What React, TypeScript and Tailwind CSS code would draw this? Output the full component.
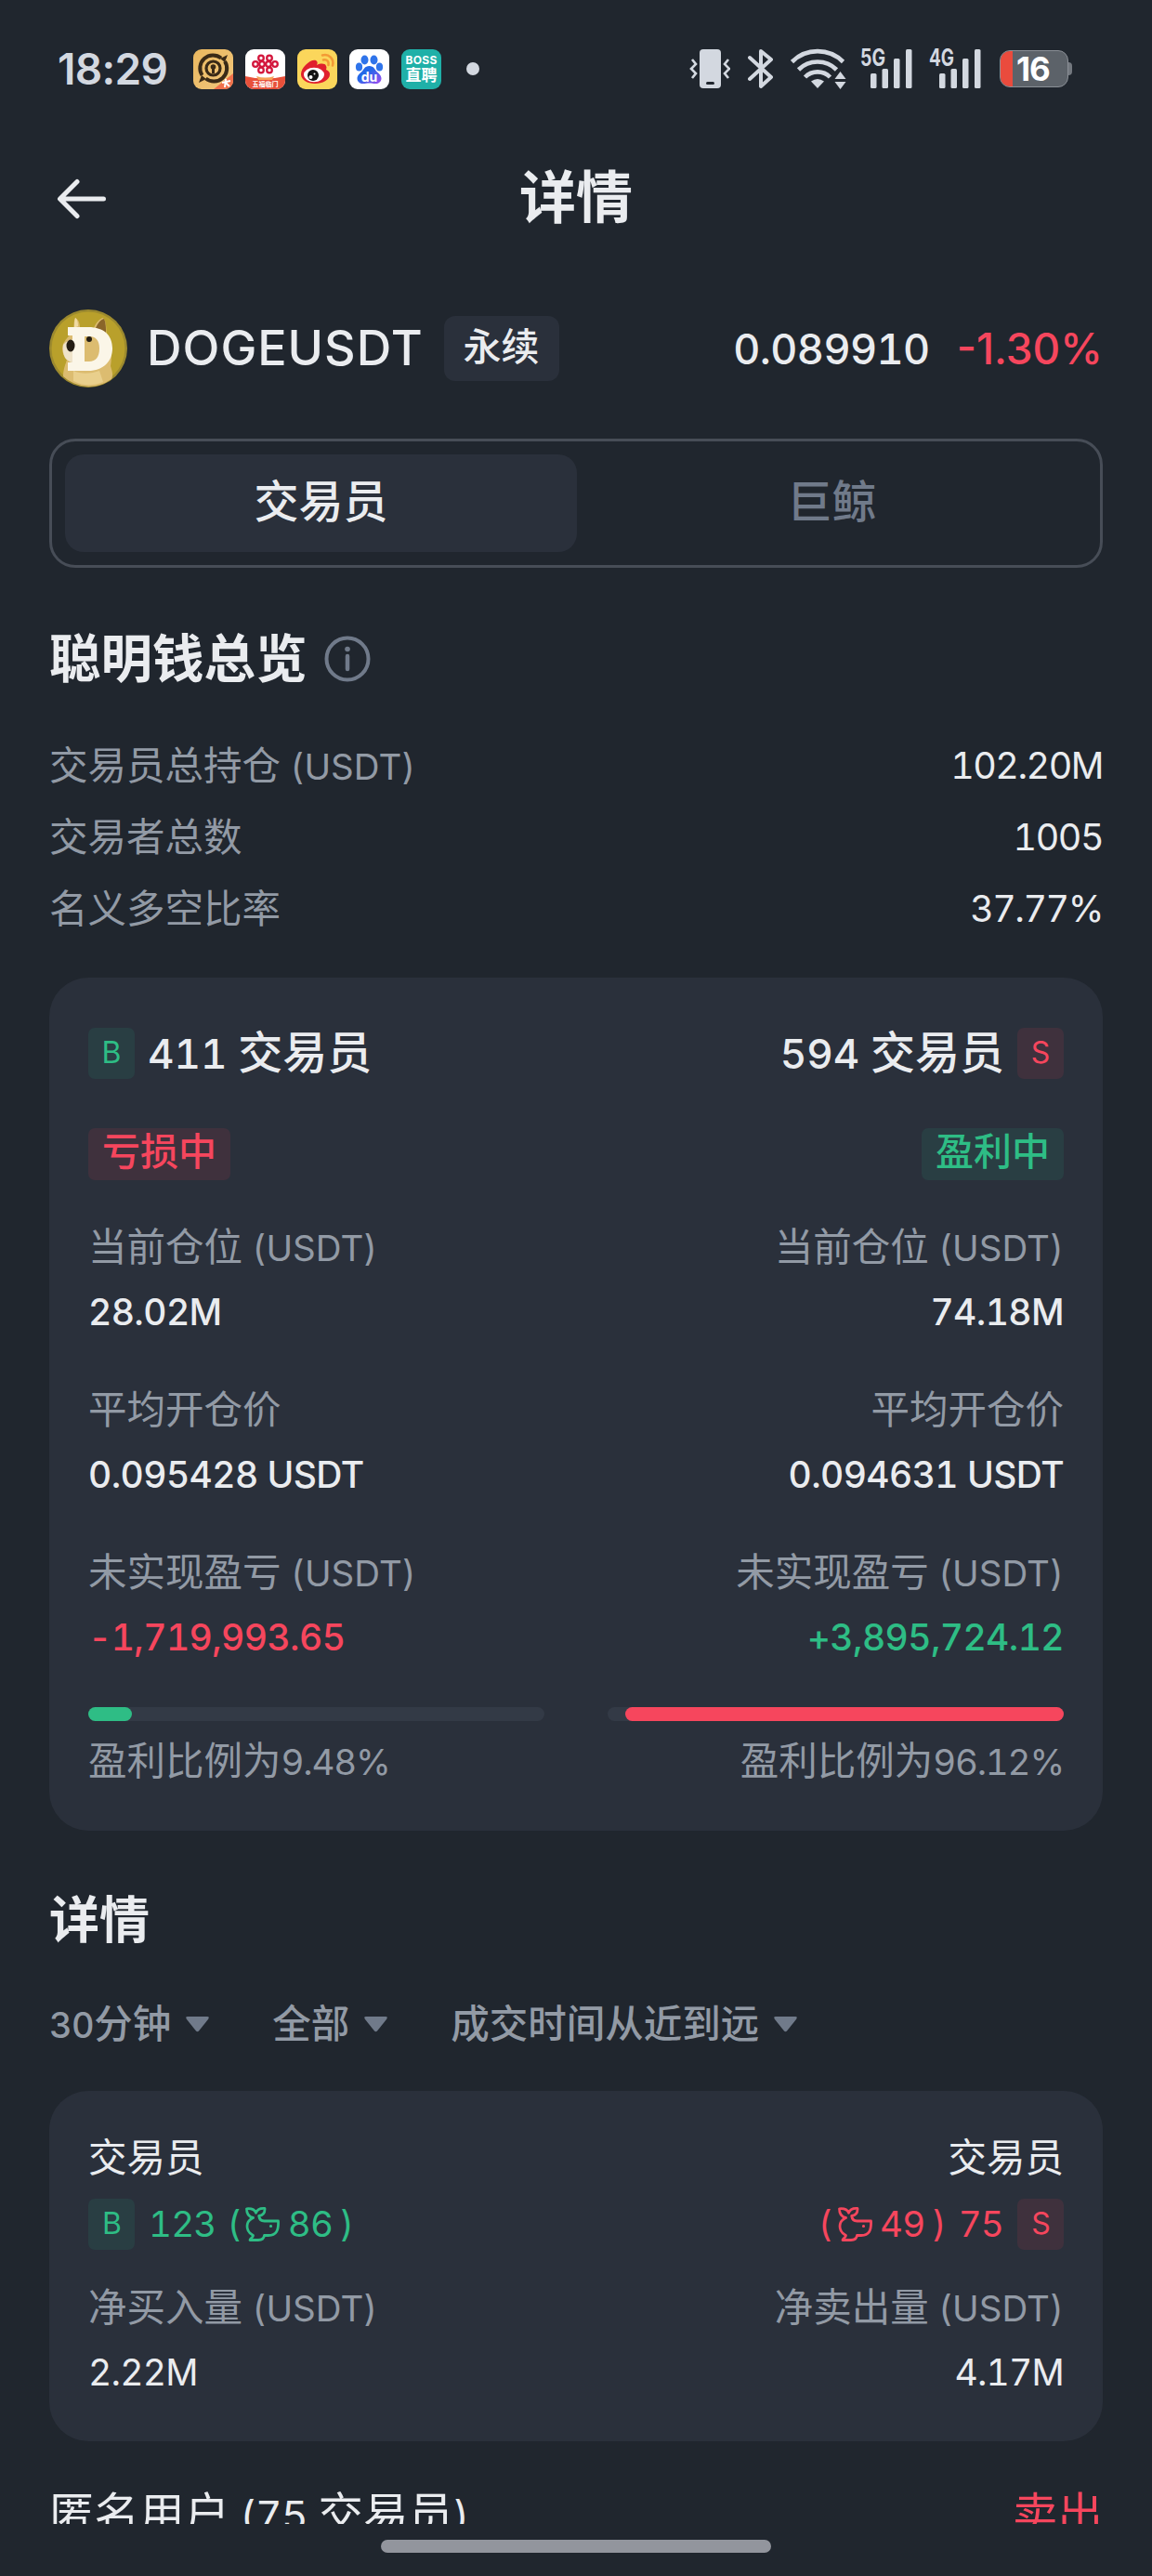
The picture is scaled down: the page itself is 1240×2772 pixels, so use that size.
import React from 'react';
import { clsx } from 'clsx';

type Side = 'buy' | 'sell';

const overview = [
  { label: '交易员总持仓', unit: ' (USDT)', value: '102.20M' },
  { label: '交易者总数', unit: '', value: '1005' },
  { label: '名义多空比率', unit: '', value: '37.77%' },
];

const positions = [
  {
    side: 'buy' as Side,
    traders: '411',
    status: '亏损中',
    profit: false,
    size: '28.02M',
    entry: '0.095428 USDT',
    pnl: '-1,719,993.65',
    ratio: 9.48,
  },
  {
    side: 'sell' as Side,
    traders: '594',
    status: '盈利中',
    profit: true,
    size: '74.18M',
    entry: '0.094631 USDT',
    pnl: '+3,895,724.12',
    ratio: 96.12,
  },
];

const filters = [
  { num: '30', label: '分钟' },
  { num: '', label: '全部' },
  { num: '', label: '成交时间从近到远' },
];

function AppIcons() {
  return (
    <div className="flex items-center gap-[13px]">
      <svg className="w-[43px] h-[43px]" viewBox="0 0 43 43">
        <defs>
          <linearGradient id="gold" x1="0" y1="0" x2="1" y2="1">
            <stop offset="0" stopColor="#e9b75f" />
            <stop offset="1" stopColor="#f2c77c" />
          </linearGradient>
          <clipPath id="appClip">
            <rect width="43" height="43" rx="9" />
          </clipPath>
        </defs>
        <g clipPath="url(#appClip)">
          <rect width="43" height="43" fill="url(#gold)" />
          <path d="M22 43 43 26V43Z" fill="#f0714c" />
          <path d="M30 9.5A14 14 0 0 0 9.5 28" fill="none" stroke="#3a2a17" strokeWidth="4" />
          <path d="M13.5 31.5A14 14 0 0 0 34 13" fill="none" stroke="#3a2a17" strokeWidth="4" />
          <path d="M37 6 29 10l5 4ZM6 36l8-4-5-4Z" fill="#3a2a17" />
          <circle cx="21.5" cy="20.5" r="7.5" fill="none" stroke="#3a2a17" strokeWidth="3.2" />
          <circle cx="21.5" cy="19" r="2.8" fill="#3a2a17" />
          <path d="M20 20h3v6h-3z" fill="#3a2a17" />
          <path d="m31 36 9-2M35 32l-1 9M35 36l4 4" stroke="#fff" strokeWidth="2" />
        </g>
      </svg>
      <svg className="w-[43px] h-[43px]" viewBox="0 0 43 43">
        <g clipPath="url(#appClip)">
          <rect width="43" height="43" fill="#fff" />
          <path d="M0 29q21 5 43 0v14H0Z" fill="#e8503a" />
          <path d="M12 29q10 3 19 0l-2 4H14Z" fill="#f6a25a" />
          <g fill="none" stroke="#d3163c" strokeWidth="2.3">
            <circle cx="17" cy="9.5" r="2.8" />
            <circle cx="26" cy="9.5" r="2.8" />
            <circle cx="11" cy="16" r="2.8" />
            <circle cx="18" cy="16" r="2.8" />
            <circle cx="25" cy="16" r="2.8" />
            <circle cx="32" cy="16" r="2.8" />
            <circle cx="17" cy="22.5" r="2.8" />
            <circle cx="26" cy="22.5" r="2.8" />
          </g>
          <text x="21.5" y="40" textAnchor="middle" fontSize="7" fontWeight="700" fill="#fff">
            五福临门
          </text>
        </g>
      </svg>
      <svg className="w-[43px] h-[43px]" viewBox="0 0 43 43">
        <g clipPath="url(#appClip)">
          <rect width="43" height="43" fill="#fbd65b" />
          <path
            d="M4 27c0-8 11-17 16-15 2 1 2 3 1 5 4-2 9-2 10 1 1 2 0 3 0 4 3 1 4 3 4 5 0 6-8 10-16 10S4 33 4 27Z"
            fill="#e0202d"
          />
          <ellipse cx="18" cy="27.5" rx="11" ry="7.8" fill="#fff" />
          <circle cx="17" cy="28" r="6" fill="#111" />
          <circle cx="14.5" cy="30" r="2" fill="#fff" />
          <circle cx="18.5" cy="26.5" r="1" fill="#fff" />
          <path
            d="M27 6.5c7-2 13 4 11 11M28 11.5c4-1 6.5 2 5.5 5.5"
            fill="none"
            stroke="#f39a35"
            strokeWidth="2.6"
            strokeLinecap="round"
          />
        </g>
      </svg>
      <svg className="w-[43px] h-[43px]" viewBox="0 0 43 43">
        <defs>
          <linearGradient id="paw" x1="0" y1="0" x2="1" y2="1">
            <stop offset=".4" stopColor="#2468e8" />
            <stop offset="1" stopColor="#a24bf0" />
          </linearGradient>
        </defs>
        <g clipPath="url(#appClip)">
          <rect width="43" height="43" fill="#fff" />
          <g fill="#2f74ea">
            <ellipse cx="16.5" cy="11.5" rx="4" ry="5" />
            <ellipse cx="26.5" cy="11.5" rx="4" ry="5" />
            <ellipse cx="10.5" cy="19" rx="3.6" ry="4.5" />
            <ellipse cx="32.5" cy="19" rx="3.6" ry="4.5" />
          </g>
          <path
            d="M21.5 18c5 0 6 4 8 6s5 4 5 7.5-3 5.5-6 5.5-4-.6-7-.6-4 .6-7 .6-6-2-6-5.5 3-5.5 5-7.5 3-6 8-6Z"
            fill="url(#paw)"
          />
          <text x="21.5" y="34.5" textAnchor="middle" fontSize="14" fontWeight="700" fill="#fff">
            du
          </text>
        </g>
      </svg>
      <div className="w-[43px] h-[43px] rounded-[9px] bg-[#1fb0a8] text-white flex flex-col items-center justify-center font-bold">
        <span className="text-[12px] leading-[15px] tracking-[0.3px]">BOSS</span>
        <span className="text-[17px] leading-[19px]">直聘</span>
      </div>
    </div>
  );
}

function Signal({ label }: { label: string }) {
  return (
    <svg className="w-[56px] h-[56px]" viewBox="0 -6 56 56" fill="#d3d8e0">
      <text x="0" y="19" fontSize="25" fontWeight="700" textLength="27" lengthAdjust="spacingAndGlyphs">
        {label}
      </text>
      <rect x="11" y="27" width="6.5" height="16" rx="1.5" />
      <rect x="23.5" y="22" width="6.5" height="21" rx="1.5" />
      <rect x="36" y="11" width="6.5" height="32" rx="1.5" />
      <rect x="49" y="1" width="6.5" height="42" rx="1.5" />
    </svg>
  );
}

function StatusBar() {
  return (
    <div className="flex items-center h-[148px] pl-[62px] pr-[86px] proportional-nums">
      <span className="text-[46px] leading-[60px] font-semibold text-[#d3d8e0] w-[146px] tracking-[-0.7px]">
        18:29
      </span>
      <AppIcons />
      <span className="ml-[27px] size-[14px] rounded-full bg-[#d3d8e0]" />
      <div className="flex items-center ml-auto">
        <svg className="w-[44px] h-[44px]" viewBox="0 0 44 44">
          <rect x="11" y="1" width="23" height="42" rx="4" fill="#d3d8e0" />
          <rect x="18" y="36" width="9" height="3" rx="1.5" fill="#20262e" />
          <path
            d="m3 12 4 5-5 5 5 5-4 5M42 12l-4 5 5 5-5 5 4 5"
            fill="none"
            stroke="#d3d8e0"
            strokeWidth="2.6"
          />
        </svg>
        <svg className="w-[28px] h-[44px] ml-[19px]" viewBox="0 0 28 44">
          <path
            d="M2 10 25 31 14 41V3l11 9L2 33"
            fill="none"
            stroke="#d3d8e0"
            strokeWidth="4"
            strokeLinejoin="round"
            strokeLinecap="round"
          />
        </svg>
        <svg className="w-[60px] h-[44px] ml-[18px]" viewBox="0 0 60 44">
          <g fill="none" stroke="#d3d8e0" strokeWidth="4.6">
            <path d="M1.5 14.5a39 39 0 0 1 55 0" />
            <path d="M8.5 23a29 29 0 0 1 41 0" />
            <path d="M15.5 31a19 19 0 0 1 27 0" />
          </g>
          <path d="M22 35.5q7-5 14 0L29 43Z" fill="#d3d8e0" />
          <path d="m47.5 33 6-8 6 8ZM47.5 36h12l-6 8Z" fill="#d3d8e0" />
        </svg>
        <span className="ml-[15px]">
          <Signal label="5G" />
        </span>
        <span className="ml-[18px]">
          <Signal label="4G" />
        </span>
        <div className="ml-[20px] w-[74px] h-[40px] rounded-[11px] bg-[#5c6269] border border-[#8a8f96] overflow-hidden flex items-center">
          <span className="w-[13px] h-full bg-[#ea4b3d]" />
          <span className="ml-[4px] text-[35px] leading-[38px] font-bold text-white tracking-[-1px]">16</span>
        </div>
        <span className="w-[4px] h-[14px] rounded-r-[4px] bg-[#73787f]" />
      </div>
    </div>
  );
}

function DogeCoin() {
  return (
    <svg className="w-[84px] h-[84px] shrink-0" viewBox="0 0 84 84">
      <circle cx="42" cy="42" r="42" fill="#9d8a2e" />
      <circle cx="42" cy="42" r="39.5" fill="#b9a02b" />
      <path
        d="M28 9c4 2 5 7 5 11h15c2-5 6-10 10-11 4 4 3 12 4 20 5 8 6 20 4 32 2 6 3 10 1 14A41 41 0 0 1 15 72c0-8 3-14 4-18-4-4-6-10-4-17 3-6 8-10 11-14 1-5 0-10 2-14Z"
        fill="#dcbc70"
      />
      <path d="M50 20c2-5 5-9 9-10 2 4 2 10 2 15Z" fill="#8a6529" />
      <path d="M28 9c2 1 3 5 3 9l-4 2c0-4 0-8 1-11Z" fill="#f0dba4" />
      <path d="M15 38c5-6 14-8 20-4l1 22c-7 4-15 1-19-4-2-4-3-9-2-14Z" fill="#efe3c9" />
      <path d="M26 66c8 4 20 3 28 0l4 12c-12 5-22 4-32-1Z" fill="#e9cf8c" />
      <path
        d="M20 19h22c17 0 26 9 26 23S58 66 42 66H20V57h5V28h-5Zm18 10v27h5c7 0 11-5 11-14s-4-13-11-13Z"
        fill="#fbf6e8"
        fillRule="evenodd"
      />
      <circle cx="43" cy="32" r="3" fill="#241d14" />
      <ellipse cx="23" cy="39" rx="4.5" ry="6.5" fill="#241d14" />
    </svg>
  );
}

function Whale() {
  return (
    <svg
      className="w-[37px] h-[37px]"
      viewBox="0 0 37 37"
      fill="none"
      stroke="currentColor"
      strokeWidth="2.8"
      strokeLinejoin="round"
      strokeLinecap="round"
    >
      <path d="M8.500 11.500C3 10.500 1.500 6.500 1.500 1.800c4.500-.4 8.500.6 10 4.400 1.500-4 5-5.100 9.500-4.700.2 4-1.800 7.300-6.300 8 .5 4 2.300 5.500 5.800 5.500h15c.5 10-2 15.500-10.500 15.500h-4.500c-.5 3.500-3 5-6.500 5H5c0-2 3.500-2.500 3.500-5C3.500 28 1 23 2.500 17.500c.8-3 3-4.500 6-6Z" />
      <circle cx="27.5" cy="20.5" r="1" fill="currentColor" strokeWidth="1.2" />
    </svg>
  );
}

function SideBadge({ side }: { side: Side }) {
  return (
    <span
      className={clsx(
        'flex items-center justify-center w-[50px] h-[55px] rounded-[7px] text-[32px] leading-none shrink-0',
        side === 'buy' ? 'bg-[#293e43] text-[#2ebd85]' : 'bg-[#3f313d] text-[#f6465d]',
      )}
    >
      {side === 'buy' ? 'B' : 'S'}
    </span>
  );
}

function Field({ label, unit, value, color }: { label: string; unit?: boolean; value: string; color?: string }) {
  return (
    <>
      <div className="h-[70px] leading-[70px] text-[41.5px] text-[#929aa5] whitespace-pre">
        {label}
        {unit && <span className="text-[38.5px]"> (USDT)</span>}
      </div>
      <div
        className={clsx(
          'h-[70px] leading-[70px] text-[39px] font-medium tracking-[-0.6px]',
          color || 'text-[#eaecef]',
        )}
      >
        {value}
      </div>
    </>
  );
}

function PositionColumn({ item }: { item: (typeof positions)[number] }) {
  const sell = item.side === 'sell';
  return (
    <div className={clsx('flex flex-col w-[491px]', sell ? 'items-end' : 'items-start')}>
      <div className={clsx('flex items-center h-[56px] gap-[14px]', sell && 'flex-row-reverse')}>
        <SideBadge side={item.side} />
        <span className="text-[48px] leading-[56px] font-medium text-[#eaecef]">
          <span className="text-[44px]">{item.traders} </span>交易员
        </span>
      </div>
      <span
        className={clsx(
          'mt-[53px] h-[56px] px-[15px] rounded-[7px] text-[41px] leading-[50px] font-medium',
          item.profit ? 'bg-[#293e43] text-[#2ebd85]' : 'bg-[#3f313d] text-[#f6465d]',
        )}
      >
        {item.status}
      </span>
      <div className={clsx('flex flex-col gap-[35px] mt-[37px]', sell && 'text-right')}>
        <div>
          <Field label="当前仓位" unit value={item.size} />
        </div>
        <div>
          <Field label="平均开仓价" value={item.entry} />
        </div>
        <div>
          <Field label="未实现盈亏" unit value={item.pnl} color={item.profit ? 'text-[#2ebd85]' : 'text-[#f6465d]'} />
        </div>
      </div>
      <div className={clsx('flex mt-[40px] w-full h-[15px] rounded-full bg-[#333a46]', sell && 'justify-end')}>
        <div
          className={clsx('h-full rounded-full', sell ? 'bg-[#f6465d]' : 'bg-[#2ebd85]')}
          style={{ width: `${item.ratio}%` }}
        />
      </div>
      <div className="mt-[8px] leading-[70px] text-[41.5px] text-[#929aa5]">
        盈利比例为<span className="text-[38.5px] tracking-[-1.2px]">{item.ratio}%</span>
      </div>
    </div>
  );
}

function App() {
  return (
    <div className="w-[1240px] h-[2772px] overflow-hidden bg-[#20262e] text-[#eaecef] tabular-nums font-[Inter,'Noto_Sans_CJK_SC',sans-serif]">
      <StatusBar />

      <div className="flex items-center justify-center relative h-[128px] pt-[2px]">
        <svg
          className="absolute left-[60px] top-[44px] w-[56px] h-[44px]"
          viewBox="0 0 56 44"
          fill="none"
          stroke="#eaecef"
          strokeWidth="5"
          strokeLinecap="round"
          strokeLinejoin="round"
        >
          <path d="M51.5 22H5M23 3.5 4.5 22 23 40.5" />
        </svg>
        <h1 className="text-[61px] leading-[64px] font-bold">详情</h1>
      </div>

      <div className="px-[53px]">
        <div className="flex items-center mt-[57px] h-[84px]">
          <DogeCoin />
          <span className="ml-[21px] text-[52px] leading-none font-medium tracking-[1px]">DOGEUSDT</span>
          <span className="ml-[22px] h-[70px] px-[21px] rounded-[12px] bg-[#2a303b] text-[41px] leading-[66px] font-medium">
            永续
          </span>
          <span className="ml-auto text-[45px] leading-none font-medium tracking-[-0.6px]">0.089910</span>
          <span className="ml-[29px] text-[46px] leading-none font-medium proportional-nums text-[#f6465d]">-1.30%</span>
        </div>

        <div className="flex mt-[55px] h-[139px] p-[14px] border-[3px] border-[#474d57] rounded-[28px] text-[48px] leading-[102px] font-medium text-center">
          <div className="w-[551px] h-[105px] rounded-[20px] bg-[#2a303b]">交易员</div>
          <div className="flex-1 text-[#707a8a]">巨鲸</div>
        </div>

        <div className="flex items-center mt-[66px] h-[64px]">
          <h2 className="text-[55.5px] leading-[64px] font-bold">聪明钱总览</h2>
          <svg className="ml-[18px] w-[50px] h-[50px]" viewBox="0 0 50 50" fill="none" stroke="#707a8a">
            <circle cx="25" cy="25" r="22.5" strokeWidth="4" />
            <path d="M25 22v14" strokeWidth="4.5" strokeLinecap="round" />
            <circle cx="25" cy="14.5" r="2.8" fill="#707a8a" stroke="none" />
          </svg>
        </div>

        <div className="mt-[45px]">
          {overview.map((row) => (
            <div key={row.label} className="flex justify-between h-[77px] leading-[77px] text-[41.5px]">
              <span className="text-[#929aa5] whitespace-pre">
                {row.label}
                <span className="text-[38.5px]">{row.unit}</span>
              </span>
              <span className="text-[39.5px] tracking-[-1.5px]">{row.value}</span>
            </div>
          ))}
        </div>

        <div className="flex justify-between mt-[35px] h-[918px] px-[42px] pt-[53px] rounded-[42px] bg-[#2a303b]">
          {positions.map((item) => (
            <PositionColumn key={item.side} item={item} />
          ))}
        </div>

        <h2 className="mt-[65px] h-[63px] text-[54px] leading-[64px] font-bold">详情</h2>

        <div className="flex items-center mt-[48px] h-[64px] text-[41.5px] leading-[64px] font-medium text-[#929aa5]">
          {filters.map((f) => (
            <div key={f.label} className="flex items-center mr-[68px]">
              <span>
                <span className="text-[38px] tracking-[-0.5px]">{f.num}</span>
                {f.label}
              </span>
              <svg className="ml-[16px] w-[25px] h-[17px]" viewBox="0 0 25 17" fill="#707a8a">
                <path d="M2 0h21q3 0 1 3L14 15.5q-1.5 1.5-3 0L1 3Q-1 0 2 0Z" />
              </svg>
            </div>
          ))}
        </div>

        <div className="flex justify-between mt-[40px] h-[377px] px-[42px] pt-[37px] rounded-[42px] bg-[#2a303b] text-[41.5px]">
          <div className="flex flex-col">
            <span className="h-[70px] leading-[70px]">交易员</span>
            <div className="flex items-center mt-[8px] h-[56px] text-[38.5px] leading-none tracking-[-0.8px] text-[#2ebd85]">
              <SideBadge side="buy" />
              <span className="ml-[15px]">123</span>
              <span className="ml-[12px]">(</span>
              <span className="ml-[5px]">
                <Whale />
              </span>
              <span className="ml-[9px]">86</span>
              <span className="ml-[8px]">)</span>
            </div>
            <span className="mt-[27px] h-[70px] leading-[70px] text-[#929aa5] whitespace-pre">
              净买入量<span className="text-[38.5px]"> (USDT)</span>
            </span>
            <span className="h-[70px] leading-[70px] text-[39px] tracking-[-0.8px]">2.22M</span>
          </div>
          <div className="flex flex-col items-end">
            <span className="h-[70px] leading-[70px]">交易员</span>
            <div className="flex items-center mt-[8px] h-[56px] text-[38.5px] leading-none tracking-[-0.8px] text-[#f6465d]">
              <span>(</span>
              <span className="ml-[7px]">
                <Whale />
              </span>
              <span className="ml-[8px]">49</span>
              <span className="ml-[8px]">)</span>
              <span className="ml-[14px] mr-[15px]">75</span>
              <SideBadge side="sell" />
            </div>
            <span className="mt-[27px] h-[70px] leading-[70px] text-[#929aa5] whitespace-pre">
              净卖出量<span className="text-[38.5px]"> (USDT)</span>
            </span>
            <span className="h-[70px] leading-[70px] text-[39px] tracking-[-0.8px]">4.17M</span>
          </div>
        </div>

        {/* the list continues below the fold, only the top of this row shows */}
        <div className="flex justify-between mt-[49px] h-[40px] overflow-hidden text-[48.5px] leading-[60px]">
          <span>
            匿名用户<span className="text-[44px] tracking-[-0.5px]"> (75 </span>交易员<span className="text-[44px]">)</span>
          </span>
          <span className="text-[#f6465d]">卖出</span>
        </div>
      </div>

      <div className="mx-auto mt-[17px] w-[420px] h-[14px] rounded-full bg-[#92959d]" />
    </div>
  );
}

export default App;
